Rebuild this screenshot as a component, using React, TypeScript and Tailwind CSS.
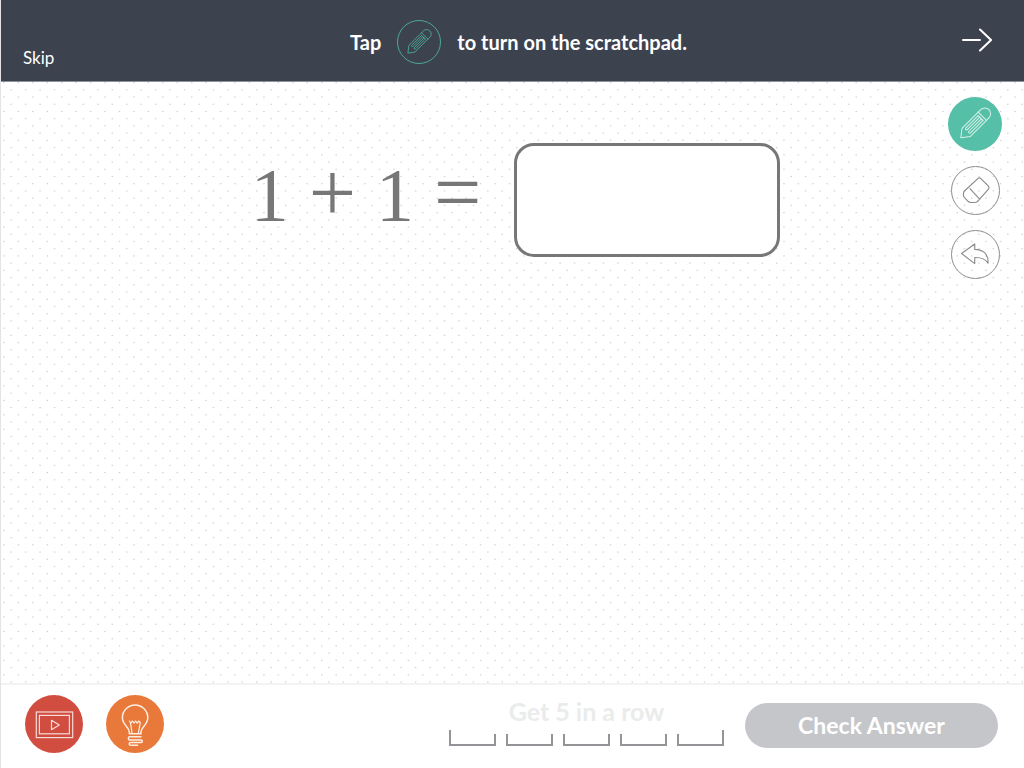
import type { ReactNode } from "react";

function PencilIcon({ className, strokeWidth }: { className: string; strokeWidth: number }) {
  return (
    <svg viewBox="0 0 54 54" className={className} fill="none" stroke="currentColor" strokeWidth={strokeWidth} strokeLinejoin="round" strokeLinecap="round" aria-hidden="true">
      <g transform="translate(12.8 40.8) rotate(-45)">
        <path d="M0 0 L7.5 -5.8 H34 a5.8 5.8 0 0 1 0 11.6 H7.5 Z" />
        <path d="M30.5 -5.8 V5.8" />
        <path d="M28 -3.4 H10 Q8.5 -2.2 10 -1.1 H28 M28 3.4 H10 Q8.5 2.2 10 1.1 H28" />
        <path d="M28 -3.4 V3.4" />
      </g>
    </svg>
  );
}

function EraserIcon() {
  return (
    <svg viewBox="0 0 49 49" className="size-full" fill="none" stroke="currentColor" strokeWidth="1.2" strokeLinejoin="round" aria-hidden="true">
      <path d="M27.2 11.8 Q28.5 10.8 29.8 11.8 L38 20 Q39.3 21.5 38 23 L27.5 35 Q26 37 24 37 H19.5 Q18 37 17 36 L12.8 31.6 Q12 30.7 12 29.5 V27.5 Q12 26 13 25 Z" />
      <path d="M18.5 22.3 L28.8 33.5" />
    </svg>
  );
}

function UndoIcon() {
  return (
    <svg viewBox="0 0 49 49" className="size-full" fill="none" stroke="currentColor" strokeWidth="1.2" strokeLinejoin="round" aria-hidden="true">
      <path d="M10 23.5 L23.7 13.5 V19.2 C32 19.5 38 23 37.6 33.6 C34.5 28.5 30 27.4 23.7 27.6 V34 Z" />
    </svg>
  );
}

function ArrowIcon() {
  return (
    <svg viewBox="0 0 30 24" className="h-6 w-[30px]" fill="none" stroke="currentColor" strokeWidth="2" strokeLinecap="round" aria-hidden="true">
      <path d="M1 12 H18 M18 1.5 L29 12 L18 22.5" />
    </svg>
  );
}

function VideoIcon() {
  return (
    <svg viewBox="0 0 58 58" className="size-full" fill="none" stroke="#f6dcd9" strokeWidth="1.2" aria-hidden="true">
      <rect x="11.3" y="17" width="36.4" height="25.6" />
      <rect x="14.4" y="20.4" width="30" height="18.4" />
      <path d="M26.5 25.3 L34.3 30 L26.5 34.7 Z" strokeLinejoin="round" />
    </svg>
  );
}

function BulbIcon() {
  return (
    <svg viewBox="0 0 58 58" className="size-full" fill="none" stroke="#fdeee3" strokeWidth="1.5" strokeLinejoin="round" strokeLinecap="round" aria-hidden="true">
      <path d="M23.3 38.8 V37 C23.3 32 16.4 30 16.4 22.8 A12.7 12.7 0 0 1 41.8 22.8 C41.8 30 35 32 35 37 V38.8 Z" />
      <path strokeWidth="1.2" d="M23.4 26 L24.8 28.2 L26.4 26 L28 28.2 L29.6 26 L31.2 28.2 L32.8 26 L34.4 27.6 M24.6 28.4 L26 38 M34.2 27.8 L32.4 38" />
      <path d="M35 41.8 H23.5 A1.7 1.7 0 0 0 23.5 45 H35 A1.3 1.3 0 0 1 35 47.6 H24.5 A1.3 1.3 0 0 0 24.5 50.2 H31.5" />
    </svg>
  );
}

function DotGrid() {
  return (
    <svg className="absolute inset-0 -z-10 size-full" aria-hidden="true">
      <defs>
        <pattern id="dots" x="2" y="0" width="130" height="130" patternUnits="userSpaceOnUse">
          {Array.from({ length: 18 }, (_, row) =>
            Array.from({ length: 9 }, (_, col) => (
              <rect
                key={`${row}-${col}`}
                x={((col * 2 + (row % 2)) * 65) / 9 + 0.2}
                y={(row * 65) / 9}
                width="1.5"
                height="1.2"
                fill="#d2d2d4"
              />
            )),
          )}
        </pattern>
      </defs>
      <rect width="100%" height="100%" fill="url(#dots)" />
    </svg>
  );
}

function ToolButton({ label, children }: { label: string; children: ReactNode }) {
  return (
    <button type="button" aria-label={label} className="size-[49px] rounded-full border border-[#8c8c8c] bg-transparent text-[#8c8c8c]">
      {children}
    </button>
  );
}

function Slot({ first, last }: { first: boolean; last: boolean }) {
  return (
    <li className="flex w-[47px] items-end text-[#939498]">
      <span className={first ? "h-4 w-0.5 bg-current" : "h-3 w-0.5 bg-current"} />
      <span className="h-0.5 flex-1 bg-current" />
      <span className={last ? "h-4 w-0.5 bg-current" : "h-3 w-0.5 bg-current"} />
    </li>
  );
}

export default function App() {
  return (
    <div className="flex min-h-screen flex-col border-l border-[#e4e4e6] bg-white font-['Lato',sans-serif]">
      <header className="grid grid-cols-[1fr_auto_1fr] border-b border-[#8f929b] bg-[#3d424f] pr-2 pl-5 text-white">
        <button type="button" className="mb-[11px] ml-0.5 self-end justify-self-start text-[17px] leading-6">
          Skip
        </button>
        <p className="flex h-[81px] items-center gap-4 pt-[3px] text-xl font-bold">
          <span>Tap</span>
          <span className="size-11 rounded-full border border-[#4ba898] text-[#4ba898]">
            <PencilIcon className="size-full" strokeWidth={1.1} />
          </span>
          <span>to turn on the scratchpad.</span>
        </p>
        <button type="button" aria-label="Next" className="self-center justify-self-end px-6 pb-0.5">
          <ArrowIcon />
        </button>
      </header>

      <main className="relative isolate grid flex-1 grid-cols-[1fr_auto_1fr] items-start pr-[22px] pl-7">
        <DotGrid />
        <label htmlFor="answer" className="col-start-2 mt-[61px] flex items-center text-[#777777]">
          <span className="flex items-baseline gap-5 pr-[33px] pb-3 font-['Liberation_Serif',serif] text-[76px] leading-[84px]">
            <span>1</span>
            <span className="text-[84px]">+</span>
            <span>1</span>
            <span className="text-[84px]">=</span>
          </span>
          <input
            id="answer"
            type="text"
            inputMode="numeric"
            autoComplete="off"
            className="h-[114px] w-[266px] rounded-[20px] border-3 border-[#777777] bg-white text-center text-6xl outline-none"
          />
        </label>
        <div className="mt-[15px] flex flex-col items-center gap-[15px] justify-self-end">
          <button type="button" aria-label="Scratchpad" className="size-[54px] rounded-full bg-[#55bfa7] text-[#d6f2eb]">
            <PencilIcon className="size-full" strokeWidth={1} />
          </button>
          <ToolButton label="Eraser">
            <EraserIcon />
          </ToolButton>
          <ToolButton label="Undo">
            <UndoIcon />
          </ToolButton>
        </div>
      </main>

      <footer className="flex h-[85px] items-center border-t-2 border-[#f3f3f4] bg-white pr-[26px] pl-6">
        <div className="flex flex-1 gap-[23px] pb-1.5">
          <button type="button" aria-label="Watch video" className="size-[58px] rounded-full bg-[#d14d40]">
            <VideoIcon />
          </button>
          <button type="button" aria-label="Hint" className="size-[58px] rounded-full bg-[#e8793a]">
            <BulbIcon />
          </button>
        </div>
        <div className="mr-[21px] flex flex-col items-center gap-[3px] pb-3">
          <p className="text-[25px] leading-8 font-bold text-[#eaecec]">Get 5 in a row</p>
          <ul className="flex items-end gap-[10px]">
            {[0, 1, 2, 3, 4].map((i) => (
              <Slot key={i} first={i === 0} last={i === 4} />
            ))}
          </ul>
        </div>
        <button type="button" className="mb-[3px] h-[45px] w-[253px] rounded-full bg-[#c5c6ca] text-[23px] font-bold text-white">
          Check Answer
        </button>
      </footer>
    </div>
  );
}
